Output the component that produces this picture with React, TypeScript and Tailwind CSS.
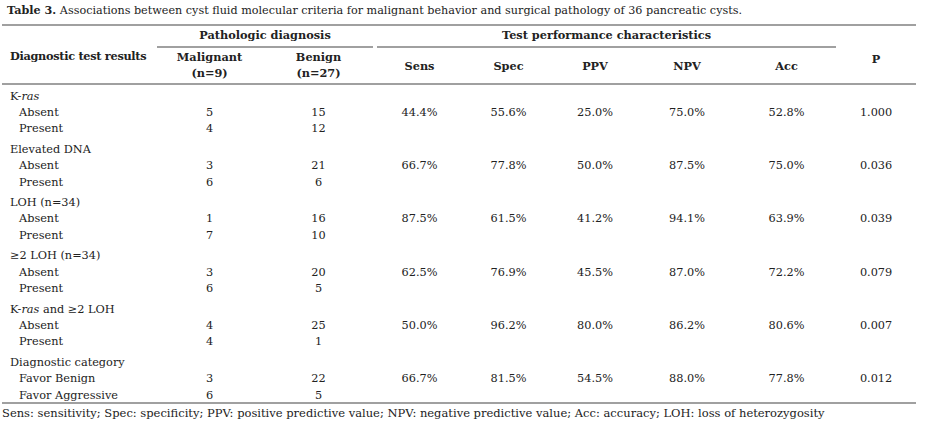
const groups = [
  {
    label: <>K-<i>ras</i></>,
    rows: [
      ["Absent", "5", "15"],
      ["Present", "4", "12"],
    ],
    stats: ["44.4%", "55.6%", "25.0%", "75.0%", "52.8%", "1.000"],
  },
  {
    label: <>Elevated DNA</>,
    rows: [
      ["Absent", "3", "21"],
      ["Present", "6", "6"],
    ],
    stats: ["66.7%", "77.8%", "50.0%", "87.5%", "75.0%", "0.036"],
  },
  {
    label: <>LOH (n=34)</>,
    rows: [
      ["Absent", "1", "16"],
      ["Present", "7", "10"],
    ],
    stats: ["87.5%", "61.5%", "41.2%", "94.1%", "63.9%", "0.039"],
  },
  {
    label: <>≥2 LOH (n=34)</>,
    rows: [
      ["Absent", "3", "20"],
      ["Present", "6", "5"],
    ],
    stats: ["62.5%", "76.9%", "45.5%", "87.0%", "72.2%", "0.079"],
  },
  {
    label: <>K-<i>ras</i> and ≥2 LOH</>,
    rows: [
      ["Absent", "4", "25"],
      ["Present", "4", "1"],
    ],
    stats: ["50.0%", "96.2%", "80.0%", "86.2%", "80.6%", "0.007"],
  },
  {
    label: <>Diagnostic category</>,
    rows: [
      ["Favor Benign", "3", "22"],
      ["Favor Aggressive", "6", "5"],
    ],
    stats: ["66.7%", "81.5%", "54.5%", "88.0%", "77.8%", "0.012"],
  },
];

const App = () => {
  return (
    <div className="w-[927px] h-[425px] bg-white text-[#222] font-['DejaVu_Serif',serif] text-[11.3px] leading-[16.4px] px-[2px] pt-[2px] overflow-hidden">
      <p className="pl-[5px] pb-[5px] text-[11.2px]">
        <b>Table 3.</b> Associations between cyst fluid molecular criteria for
        malignant behavior and surgical pathology of 36 pancreatic cysts.
      </p>
      <table className="w-[914px] table-fixed border-collapse">
        <colgroup>
          <col className="w-[155px]" />
          <col className="w-[105px]" />
          <col className="w-[113px]" />
          <col className="w-[89px]" />
          <col className="w-[89px]" />
          <col className="w-[84px]" />
          <col className="w-[100px]" />
          <col className="w-[99px]" />
          <col className="w-[80px]" />
        </colgroup>
        <thead>
          <tr className="border-t-2 border-[#a0a0a0]">
            <th
              rowSpan={2}
              className="text-left font-bold pl-[8px] align-middle pt-[3px] tracking-[-0.3px]"
            >
              Diagnostic test results
            </th>
            <th colSpan={2} className="font-bold p-0">
              <div className="border-b-2 border-[#a0a0a0] mr-[2px] pt-[1px] pb-[2px]">
                Pathologic diagnosis
              </div>
            </th>
            <th colSpan={5} className="font-bold p-0">
              <div className="border-b-2 border-[#a0a0a0] ml-[2px] pt-[1px] pb-[2px]">
                Test performance characteristics
              </div>
            </th>
            <th rowSpan={2} className="font-bold align-middle pt-[10px]">
              P
            </th>
          </tr>
          <tr className="border-b-2 border-[#a0a0a0]">
            <th className="font-bold pt-[1px] pb-[1px]">
              Malignant
              <br />
              (n=9)
            </th>
            <th className="font-bold pt-[1px] pb-[1px]">
              Benign
              <br />
              (n=27)
            </th>
            <th className="font-bold pt-[1px]">Sens</th>
            <th className="font-bold pt-[1px]">Spec</th>
            <th className="font-bold pt-[1px]">PPV</th>
            <th className="font-bold pt-[1px]">NPV</th>
            <th className="font-bold pt-[1px]">Acc</th>
          </tr>
        </thead>
        {groups.map((g, i) => {
          const last = i === groups.length - 1;
          return (
            <tbody key={i} className={last ? "border-b-2 border-[#a0a0a0]" : ""}>
              <tr>
                <td className="pl-[8px] pt-[4px]" colSpan={9}>
                  {g.label}
                </td>
              </tr>
              {g.rows.map((r, j) => {
                const cell =
                  last && j === 1 ? "leading-[13px] pt-[1.5px]" : "";
                return (
                  <tr key={j}>
                    <td className={"pl-[17px] " + cell}>{r[0]}</td>
                    <td className={"text-center " + cell}>{r[1]}</td>
                    <td className={"text-center " + cell}>{r[2]}</td>
                    {g.stats.map((s, k) => (
                      <td key={k} className={"text-center " + cell}>
                        {j === 0 ? s : ""}
                      </td>
                    ))}
                  </tr>
                );
              })}
            </tbody>
          );
        })}
      </table>
      <p className="pt-[1px] text-[11.5px]">
        Sens: sensitivity; Spec: specificity; PPV: positive predictive value;
        NPV: negative predictive value; Acc: accuracy; LOH: loss of
        heterozygosity
      </p>
    </div>
  );
};

export default App;
